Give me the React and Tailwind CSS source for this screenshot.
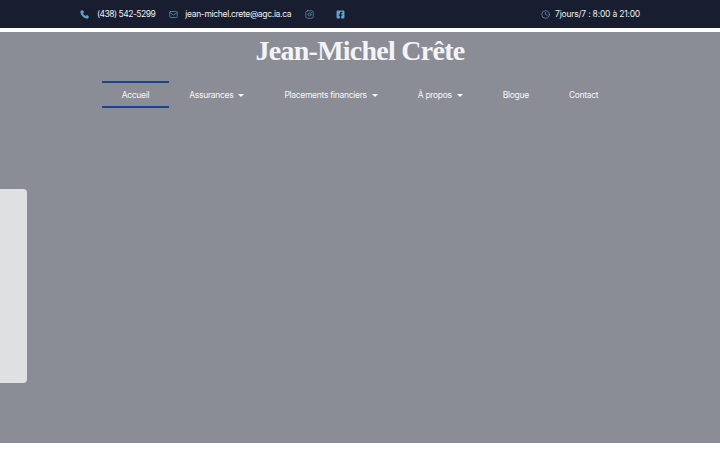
import { Phone, Mail, Instagram, Clock } from "lucide-react"
import { FaFacebookSquare } from "react-icons/fa"

const NavItem = ({ label, active, caret }) => (
	<a
		className={`flex h-[27px] items-center gap-[5px] px-5 pt-[1px] border-y-2 ${active ? "border-[#1d4690]" : "border-transparent"}`}
	>
		<span>{label}</span>
		{caret && <span className="w-0 h-0 border-x-[3px] border-x-transparent border-t-[3px] border-t-white" />}
	</a>
)

const App = () => {
	return (
		<div className="relative w-[720px] h-[450px] overflow-hidden bg-white font-['Inter',sans-serif] text-white">

			{/* Top bar */}
			<div className="h-7 flex items-center justify-between px-20 bg-[#181e2f] text-[8.5px] text-[#eeeff2]">
				<div className="flex items-center">
					<Phone className="w-[9px] h-[9px] mr-2 text-[#63a5d0] fill-[#63a5d0]" />
					<span className="tracking-[-0.5px]">(438) 542-5299</span>
					<Mail className="w-[9px] h-[9px] ml-[14px] mr-[7px] text-[#5d93b5]" />
					<span className="tracking-[-0.32px]">jean-michel.crete@agc.ia.ca</span>
					<Instagram className="w-[9px] h-[9px] ml-[14px] text-[#5d93b5]" />
					<FaFacebookSquare className="w-[9px] h-[9px] ml-[22px] text-[#63a5d0]" />
				</div>
				<div className="flex items-center">
					<Clock className="w-[9px] h-[9px] mr-[5px] text-[#5d93b5]" />
					<span className="tracking-[-0.2px]">7jours/7 : 8:00 à 21:00</span>
				</div>
			</div>

			{/* Hero */}
			<div className="mt-1 h-[411px] bg-[#8b8d96]">
				<h1 className="pt-[1px] text-center font-['Liberation_Serif',serif] font-bold text-[28px] tracking-[-0.75px] leading-[36px] text-[#f4f4f6]">
					Jean-Michel Crête
				</h1>
				<nav className="mt-3 flex justify-center text-[8.5px] tracking-[-0.3px] text-[#f6f6f8]">
					<NavItem label="Accueil" active />
					<NavItem label="Assurances" caret />
					<NavItem label="Placements financiers" caret />
					<NavItem label="À propos" caret />
					<NavItem label="Blogue" />
					<NavItem label="Contact" />
				</nav>
			</div>

			{/* Side panel */}
			<div className="absolute left-0 top-[189px] w-[27px] h-[194px] rounded-r-[4px] bg-[#dfe0e2]" />
		</div>
	)
}

export default App
